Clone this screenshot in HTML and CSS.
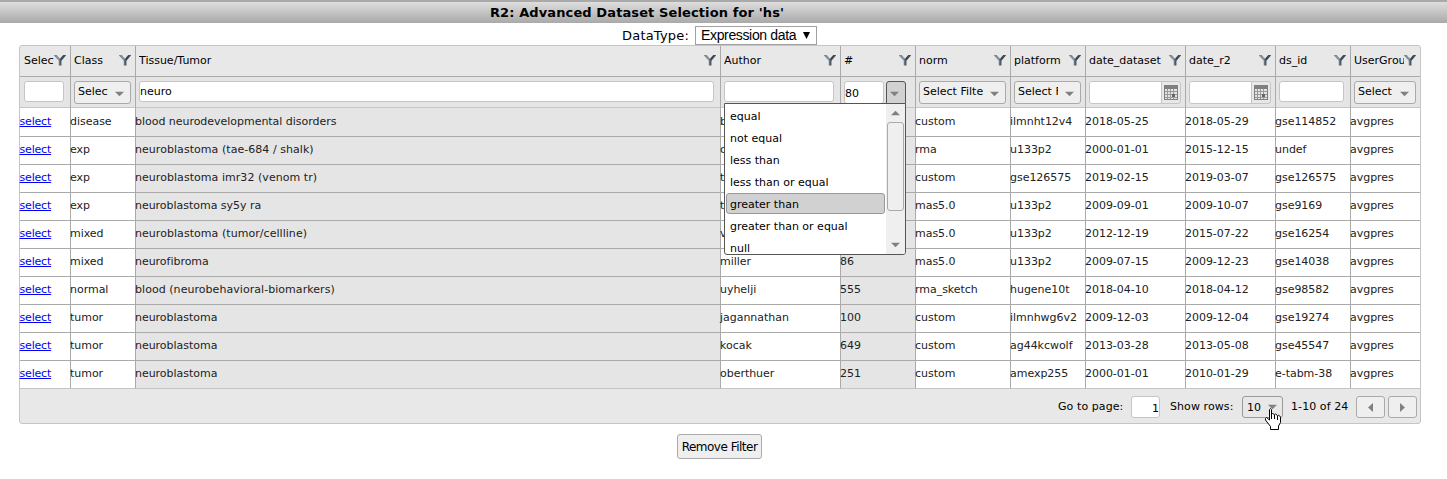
FILE: index.html
```html
<!DOCTYPE html>
<html lang="en">
<head>
<meta charset="utf-8">
<title>R2: Advanced Dataset Selection</title>
<link rel="stylesheet" href="styles.css">
</head>
<body>
<svg class="defs" width="0" height="0">
  <defs>
    <linearGradient id="steel" x1="0" y1="0" x2="1" y2="0"><stop offset="0" stop-color="#78828a"/><stop offset=".38" stop-color="#8796a1"/><stop offset=".5" stop-color="#5b6670"/><stop offset=".62" stop-color="#39424b"/><stop offset="1" stop-color="#4d565f"/></linearGradient>
    <symbol id="funnel" viewBox="0 0 12 11"><path d="M0 0H2.800L6 3.700L9.200 0H12V.6L7.400 5.700V10.500H4.700V5.700L0 .6Z" fill="url(#steel)"/></symbol>
    <symbol id="down" viewBox="0 0 10 6"><path d="M0 0.5H10L5 5.5Z" fill="#808080"/></symbol>
    <symbol id="cal" viewBox="0 0 14 15"><path d="M0 0H14V15H0Z" fill="#808080"/><path d="M1 4h12v10H1Z" fill="#e4e4e4"/><path d="M3.5 4v10M6.5 4v10M9.5 4v10M1 6.500h12M1 9.500h12M1 12.500h12" stroke="#999" fill="none"/><path d="M8 9h3v3H8Z" fill="#666"/></symbol>
  </defs>
</svg>
<header class="title"><span>R2: Advanced Dataset Selection for 'hs'</span></header>
<div class="datatype"><label>DataType:</label><div class="native"><span>Expression data</span><svg width="7" height="7" viewBox="0 0 7 7"><path d="M0 0H7L3.5 7Z" fill="#000"/></svg></div></div>
<main class="grid">
  <div class="row head">
    <div><span>Select</span><svg><use href="#funnel"/></svg></div>
    <div><span>Class</span><svg><use href="#funnel"/></svg></div>
    <div><span>Tissue/Tumor</span><svg><use href="#funnel"/></svg></div>
    <div><span>Author</span><svg><use href="#funnel"/></svg></div>
    <div><span>#</span><svg><use href="#funnel"/></svg></div>
    <div><span>norm</span><svg><use href="#funnel"/></svg></div>
    <div><span>platform</span><svg><use href="#funnel"/></svg></div>
    <div><span>date_dataset</span><svg><use href="#funnel"/></svg></div>
    <div><span>date_r2</span><svg><use href="#funnel"/></svg></div>
    <div><span>ds_id</span><svg><use href="#funnel"/></svg></div>
    <div><span>UserGroup</span><svg><use href="#funnel"/></svg></div>
  </div>
  <div class="row filters">
    <div><div class="input"></div></div>
    <div><div class="combo"><span>Select Filter</span><svg><use href="#down"/></svg></div></div>
    <div><div class="input">neuro</div></div>
    <div><div class="input"></div></div>
    <div class="numeric"><div class="input">80</div><div class="op"><svg><use href="#down"/></svg></div>
      <div class="menu">
        <ul><li>equal</li><li>not equal</li><li>less than</li><li>less than or equal</li><li class="on">greater than</li><li>greater than or equal</li><li>null</li></ul>
        <div class="scroll"><svg class="up"><use href="#down"/></svg><i></i><svg><use href="#down"/></svg></div>
      </div>
    </div>
    <div><div class="combo"><span>Select Filter</span><svg><use href="#down"/></svg></div></div>
    <div><div class="combo"><span>Select Filter</span><svg><use href="#down"/></svg></div></div>
    <div><div class="date"><i></i><b><svg><use href="#cal"/></svg></b></div></div>
    <div><div class="date"><i></i><b><svg><use href="#cal"/></svg></b></div></div>
    <div><div class="input"></div></div>
    <div><div class="combo"><span>Select</span><svg><use href="#down"/></svg></div></div>
  </div>
  <div class="row data first"><div><a>select</a></div><div>disease</div><div>blood neurodevelopmental disorders</div><div>b</div><div></div><div>custom</div><div>ilmnht12v4</div><div>2018-05-25</div><div>2018-05-29</div><div>gse114852</div><div>avgpres</div></div>
  <div class="row data"><div><a>select</a></div><div>exp</div><div class="wide">neuroblastoma (tae-684 / shalk)</div><div>c</div><div></div><div>rma</div><div>u133p2</div><div>2000-01-01</div><div>2015-12-15</div><div>undef</div><div>avgpres</div></div>
  <div class="row data"><div><a>select</a></div><div>exp</div><div class="wide">neuroblastoma imr32 (venom tr)</div><div>t</div><div></div><div>custom</div><div>gse126575</div><div>2019-02-15</div><div>2019-03-07</div><div>gse126575</div><div>avgpres</div></div>
  <div class="row data"><div><a>select</a></div><div>exp</div><div>neuroblastoma sy5y ra</div><div>t</div><div></div><div>mas5.0</div><div>u133p2</div><div>2009-09-01</div><div>2009-10-07</div><div>gse9169</div><div>avgpres</div></div>
  <div class="row data"><div><a>select</a></div><div>mixed</div><div class="wide">neuroblastoma (tumor/cellline)</div><div>v</div><div></div><div>mas5.0</div><div>u133p2</div><div>2012-12-19</div><div>2015-07-22</div><div>gse16254</div><div>avgpres</div></div>
  <div class="row data"><div><a>select</a></div><div>mixed</div><div>neurofibroma</div><div>miller</div><div>86</div><div>mas5.0</div><div>u133p2</div><div>2009-07-15</div><div>2009-12-23</div><div>gse14038</div><div>avgpres</div></div>
  <div class="row data"><div><a>select</a></div><div>normal</div><div class="wide">blood (neurobehavioral-biomarkers)</div><div>uyhelji</div><div>555</div><div>rma_sketch</div><div>hugene10t</div><div>2018-04-10</div><div>2018-04-12</div><div>gse98582</div><div>avgpres</div></div>
  <div class="row data"><div><a>select</a></div><div>tumor</div><div>neuroblastoma</div><div>jagannathan</div><div>100</div><div>custom</div><div>ilmnhwg6v2</div><div>2009-12-03</div><div>2009-12-04</div><div>gse19274</div><div>avgpres</div></div>
  <div class="row data"><div><a>select</a></div><div>tumor</div><div>neuroblastoma</div><div>kocak</div><div>649</div><div>custom</div><div>ag44kcwolf</div><div>2013-03-28</div><div>2013-05-08</div><div>gse45547</div><div>avgpres</div></div>
  <div class="row data last"><div><a>select</a></div><div>tumor</div><div>neuroblastoma</div><div>oberthuer</div><div>251</div><div>custom</div><div>amexp255</div><div>2000-01-01</div><div>2010-01-29</div><div>e-tabm-38</div><div>avgpres</div></div>
  <footer class="pager">
    <span class="goto">Go to page:</span><div class="page">1</div><span class="show">Show rows:</span>
    <div class="size"><span>10</span><svg><use href="#down"/></svg>
      <svg class="cursor" width="17" height="22" viewBox="0 0 17 22"><path d="M4.500 1.500L5.500.5L6.500 1.500V6L7.500 5.500L9.500 6.500L10.500 6L12.500 7.500L13.500 7L15.500 9V14.500L13.500 18V21.500H5.500V18.500L.5 12V10.500L1.500 9.500L4.500 12Z" fill="#fff" stroke="#000"/><path d="M6.500 6V11M9.500 7V11M12.500 8V12" stroke="#000"/></svg>
    </div>
    <span class="count">1-10 of 24</span>
    <button class="nav"><svg width="5" height="9" viewBox="0 0 5 9"><path d="M5 0V9L0 4.500Z" fill="#808080"/></svg></button>
    <button class="nav"><svg width="5" height="9" viewBox="0 0 5 9"><path d="M0 0V9L5 4.500Z" fill="#808080"/></svg></button>
  </footer>
</main>
<button class="remove">Remove Filter</button>
</body>
</html>
```
FILE: styles.css
```css
* { box-sizing: border-box; }
body { margin: 0; background: #fff; color: #000; font: 11px "DejaVu Sans", sans-serif; font-variant-ligatures: none; overflow: hidden; }
.defs { display: block; }
.title { height: 23px; border-top: 1px solid #aaa; background: linear-gradient(#aaa 0, #aaa 1px, #dedede 1px, #a9a9a9 100%); text-align: center; padding-right: 173px; font-weight: bold; font-size: 13px; line-height: 23px; letter-spacing: .11px; white-space: nowrap; }
.datatype { display: flex; height: 22px; padding: 3px 0 0 622px; font-size: 13px; line-height: 19px; }
.datatype label { width: 73px; letter-spacing: .2px; }
.native { width: 122px; height: 19px; border: 1px solid #a0a0a0; display: flex; align-items: center; justify-content: space-between; padding: 0 6px 0 5px; font: 14px/17px "Liberation Sans", sans-serif; letter-spacing: -.35px; white-space: nowrap; }
.grid { width: 1402px; height: 379px; margin-left: 19px; border: 1px solid #c5c5c5; border-radius: 3px; background: #e8e8e8; }
.row { display: grid; grid-template-columns: 51px 65px 585px 120px 75px 95px 75px 100px 90px 75px 69px; }
.row > div { border-right: 1px solid #aaa; border-bottom: 1px solid #aaa; min-width: 0; }
.row > div:last-child { border-right: 0; }
.head { height: 31px; }
.head > div { display: flex; align-items: center; justify-content: space-between; padding: 0 4px 1px 3px; }
.head > div:first-child { padding-left: 4px; }
.head span { overflow: hidden; white-space: nowrap; flex: 1; line-height: 16px; }
.head svg { width: 12px; height: 11px; flex: none; }
.filters { height: 31px; }
.filters > div { padding: 4px 6px 0 3px; background: #e5e5e5; border-bottom-color: #c5c5c5; }
.filters > div:first-child { padding-left: 4px; }
.input { height: 21px; background: #fff; border: 1px solid #c5c5c5; border-radius: 3px; line-height: 20px; padding-left: 0; }
.combo { height: 23px; border: 1px solid #aaa; border-radius: 3px; background: #efefef; display: flex; margin-right: -2px; padding: 0 6px 0 3px; align-items: center; }
.combo span { flex: 1; overflow: hidden; white-space: nowrap; height: 20px; line-height: 18px; margin-right: 7px; }
.combo svg, .op svg, .size > svg:not(.cursor), .scroll svg { width: 9px; height: 6px; flex: none; }
.combo svg { margin-top: 3px; }
.filters .numeric { display: flex; position: relative; padding-right: 9px; }
.numeric .input { width: 40px; height: 23px; margin-right: 2px; line-height: 23px; }
.op { width: 20px; height: 23px; border: 1px solid #555; background: #d1d1d1; border-radius: 3px 3px 0 0; padding: 9px 0 0 3px; line-height: 0; }
.menu { position: absolute; z-index: 2; left: -117px; top: 26px; width: 182px; height: 152px; border: 1px solid #555; background: #fff; border-radius: 0 0 3px 3px; display: flex; overflow: hidden; }
.menu ul { list-style: none; margin: 0; padding: 1px 0 0 1px; width: 161px; flex: none; }
.menu li { width: 159px; height: 21px; line-height: 21px; margin-bottom: 1px; padding-left: 3px; border: 1px solid transparent; border-radius: 3px; }
.menu .on { background: #d1d1d1; border-color: #999; }
.scroll { width: 19px; background: #efefef; display: flex; flex-direction: column; align-items: center; padding: 6px 0; }
.scroll i { width: 17px; height: 89px; border: 1px solid #aaa; border-radius: 3px; margin: 6px 0 31px; background: #efefef; }
.scroll .up { transform: rotate(180deg); }
.date { display: flex; height: 23px; border: 1px solid #c5c5c5; border-radius: 3px; background: #e8e8e8; margin-right: -2px; overflow: hidden; }
.date i { flex: 1; background: #fff; border-right: 1px solid #c5c5c5; }
.date b { width: 18px; padding: 3px 0 0 2px; line-height: 0; }
.date svg { width: 14px; height: 15px; }
.data { height: 28px; line-height: 25px; }
.data > div { background: #fff; white-space: nowrap; text-indent: -1px; color: #222; letter-spacing: -.03px; }
.data > div:nth-child(3), .data > div:nth-child(5) { background: #e5e5e5; }
.data > .wide { letter-spacing: .05px; }
.first { height: 29px; line-height: 27px; }
.last > div { border-bottom-color: #c5c5c5; }
.data a { color: #00e; text-decoration: underline; letter-spacing: -.2px; margin-left: .6px; }
.pager { height: 34px; display: flex; align-items: center; justify-content: flex-end; padding: 2px 3px 0 0; }
.goto, .show, .count { line-height: 34px; white-space: nowrap; letter-spacing: .08px; }
.goto { width: 73px; }
.page { width: 29px; height: 22px; border: 1px solid #c5c5c5; border-radius: 3px; background: #fff; text-align: right; line-height: 23px; margin-right: 10px; }
.show { width: 72px; }
.size { position: relative; width: 41px; height: 22px; border: 1px solid #999; border-radius: 3px; background: #e8e8e8; display: flex; align-items: center; justify-content: space-between; padding: 0 5px 0 4px; margin-right: 8px; }
.cursor { position: absolute; left: 22px; top: 11px; fill: none; z-index: 2; }
.count { width: 65px; }
.nav { width: 29px; height: 22px; padding: 0; margin-right: 3px; border: 1px solid #aaa; border-radius: 3px; background: #efefef; line-height: 0; }
.nav:last-child { margin-right: 0; }
.remove { display: block; width: 85px; height: 25px; margin: 10px 0 0 677px; padding: 0; border: 1px solid #aaa; border-radius: 3px; background: #efefef; font: 12px "DejaVu Sans", sans-serif; letter-spacing: -.5px; white-space: nowrap; }
```
